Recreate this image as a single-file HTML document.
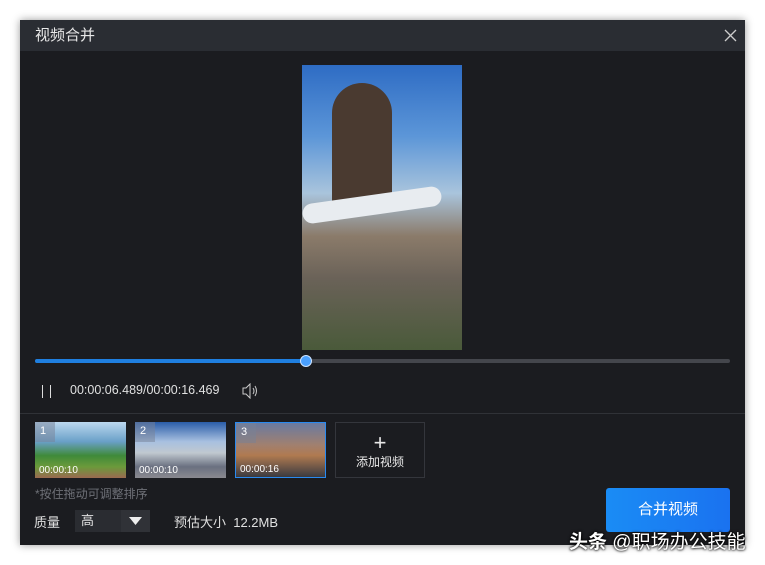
<!DOCTYPE html>
<html><head><meta charset="utf-8"><style>
body{margin:0;width:765px;height:565px;background:#fff;position:relative;overflow:hidden;font-family:"Liberation Sans","Noto Sans CJK SC",sans-serif;}
.dlg{position:absolute;left:20px;top:20px;width:725px;height:525px;background:#1b1c20;box-shadow:0 0 8px rgba(0,0,0,.4);}
.title{position:absolute;left:0;top:0;width:725px;height:31px;background:#2a2d33;color:#e8e8e8;font-size:15px;line-height:31px;}
.abs{position:absolute;}
.thumb{position:absolute;top:402px;width:91px;height:56px;overflow:hidden;}
.thumb .n{position:absolute;left:0;top:0;width:20px;height:20px;background:rgba(120,130,150,.5);color:#fff;font-size:11px;padding-left:5px;box-sizing:border-box;line-height:18px}
.thumb .t{position:absolute;left:4px;bottom:2px;color:#fff;font-size:10px}
</style></head><body>
<div class="dlg">
<div class="title"><span style="position:absolute;left:15px">视频合并</span>
<svg class="abs" style="left:704px;top:9px" width="13" height="13"><path d="M1 1L12 12M12 1L1 12" stroke="#ccc" stroke-width="1.3"/></svg></div>
<div class="abs" style="left:282px;top:45px;width:160px;height:285px;background:linear-gradient(#2e6cc4 0%,#5c96d8 25%,#a9c4dc 45%,#8b7b6a 60%,#6a6258 75%,#4a5a3a 100%)">
<div class="abs" style="left:30px;top:18px;width:60px;height:130px;background:#4a3a30;border-radius:30px 30px 10px 10px"></div>
<div class="abs" style="left:0;top:130px;width:140px;height:20px;background:#e8ecf0;border-radius:10px;transform:rotate(-8deg)"></div>
</div>
<div class="abs" style="left:15px;top:339px;width:695px;height:4px;background:#44464c;border-radius:2px"></div>
<div class="abs" style="left:15px;top:339px;width:272px;height:4px;background:#1f7fe0;border-radius:2px"></div>
<div class="abs" style="left:280px;top:335px;width:12px;height:12px;background:#4aa0ff;border:1px solid #cfe4ff;border-radius:50%;box-sizing:border-box"></div>
<div class="abs" style="left:22px;top:365px;width:1px;height:13px;background:#ddd"></div>
<div class="abs" style="left:30px;top:365px;width:1px;height:13px;background:#ddd"></div>
<div class="abs" style="left:50px;top:363px;color:#e0e0e0;font-size:12.5px">00:00:06.489/00:00:16.469</div>
<svg class="abs" style="left:222px;top:363px" width="18" height="16"><path d="M1 5H4L8 1V15L4 11H1Z" fill="none" stroke="#ccc"/><path d="M11 5Q13 8 11 11M13 3Q16 8 13 13" fill="none" stroke="#ccc"/></svg>
<div class="abs" style="left:0;top:393px;width:725px;height:1px;background:#303237"></div>
<div class="thumb" style="left:15px;background:linear-gradient(#bcd8ef 0%,#6aa0c8 35%,#3f8a3a 60%,#6b9a3b 80%,#9a6a50 100%)"><div class="n">1</div><div class="t">00:00:10</div></div>
<div class="thumb" style="left:115px;background:linear-gradient(#2a5ca8 0%,#a8c0e0 35%,#c0c8d0 55%,#6a7080 80%,#8a8a90 100%)"><div class="n">2</div><div class="t">00:00:10</div></div>
<div class="thumb" style="left:215px;border:1px solid #2a8aef;box-sizing:border-box;background:linear-gradient(#6a7aa0 0%,#a08070 40%,#b07a50 60%,#3a3a40 100%)"><div class="n">3</div><div class="t">00:00:16</div></div>
<div class="abs" style="left:315px;top:402px;width:90px;height:56px;border:1px solid #34363c;box-sizing:border-box;color:#e8e8e8;text-align:center">
<div style="font-size:22px;line-height:20px;margin-top:10px">+</div><div style="font-size:12px">添加视频</div></div>
<div class="abs" style="left:15px;top:465px;color:#6e7077;font-size:12px">*按住拖动可调整排序</div>
<div class="abs" style="left:14px;top:492px;color:#e0e0e0;font-size:13px">质量</div>
<div class="abs" style="left:55px;top:490px;width:75px;height:22px;background:#2a2c31;color:#e0e0e0;font-size:13px;line-height:22px"><span style="margin-left:6px">高</span>
<div class="abs" style="left:46px;top:0;width:29px;height:22px;background:#303237"></div>
<svg class="abs" style="left:54px;top:7px" width="13" height="8"><path d="M0 0H13L6.5 8Z" fill="#eee"/></svg></div>
<div class="abs" style="left:154px;top:492px;color:#e0e0e0;font-size:13px">预估大小 &nbsp;12.2MB</div>
<div class="abs" style="left:586px;top:468px;width:124px;height:44px;background:linear-gradient(90deg,#1a8cf5,#1a72f0);border-radius:3px;color:#fff;font-size:15px;text-align:center;line-height:44px">合并视频</div>
</div>
<div class="abs" style="left:569px;top:527px;color:#fff;font-size:19px;text-shadow:0 0 2px #000,0 0 3px #000;font-weight:bold;white-space:nowrap">头条 <span style="font-weight:normal">@职场办公技能</span></div>
</body></html>
